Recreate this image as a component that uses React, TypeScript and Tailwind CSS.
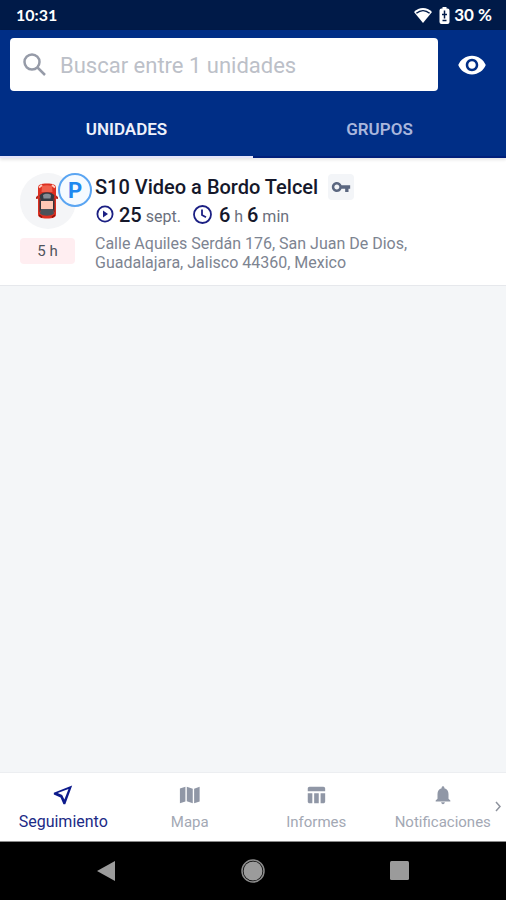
import { useState } from 'react';
import type { ReactNode } from 'react';

function StatusBar() {
  return (
    <div className="flex h-[30px] items-center justify-between bg-[#001a48] pr-[14px] pl-4 font-['Lato',sans-serif] text-[17px] font-bold text-white">
      <span className="text-[16px]">10:31</span>
      <div className="flex items-center">
        <svg width="20" height="16" viewBox="0 0 20 16" aria-hidden="true">
          <path d="M1 5C6-.2 14-.2 19 5l-9 11z" fill="#fff" />
          <path d="M3.400 6.200c4-3.400 9.200-3.400 13.200 0" fill="none" stroke="#001a48" strokeWidth="1.500" />
        </svg>
        <svg className="mr-1 ml-1.5" width="11" height="17" viewBox="0 0 11 17" aria-hidden="true">
          <path d="M3.500 0h4v1.600h1A2 2 0 0 1 10.500 3.600V15a2 2 0 0 1-2 2h-6a2 2 0 0 1-2-2V3.600a2 2 0 0 1 2-2h1z" fill="#fff" />
          <path d="M5.500 3.500v8M3 7.500h5M3.500 13.500h4" stroke="#001a48" strokeWidth="1.500" />
        </svg>
        <span>30 %</span>
      </div>
    </div>
  );
}

function Car() {
  return (
    <svg width="22" height="36" viewBox="0 0 22 36" aria-hidden="true">
      <path d="M0 14l3-2.500v4L0 16zM22 14l-3-2.500v4l3 .5z" fill="#b3261e" />
      <path d="M2 5C2 1.500 5 .5 11 .5s9 1 9 4.500v26c0 3.500-3 4.500-9 4.500S2 34.500 2 31z" fill="#dc2f20" />
      <path d="M6 3c3-1 7-1 10 0l.5 6h-11z" fill="#f0604c" />
      <path d="M3.500 12.500c3-4.500 12-4.500 15 0L17 19H5z" fill="#343a42" />
      <path d="M7 12c2-1.600 6-1.600 8 0l-.5 3.500h-7z" fill="#858c94" />
      <path d="M3.500 14.500l1.500 4v8l-1.500 3zM18.500 14.500l-1.500 4v8l1.500 3z" fill="#30343a" />
      <path d="M5 18h12v8H5z" fill="#ffc8b5" />
      <path d="M5 26h12l1 4.500c-3 3-11 3-14 0z" fill="#4b5259" />
      <path d="M3 4.500l3-2.500M19 4.500L16 2" stroke="#ffd0c4" strokeWidth="1.800" />
      <path d="M3 32l3 2.300M19 32l-3 2.300" stroke="#8c120c" strokeWidth="1.500" />
    </svg>
  );
}

function UnitRow() {
  return (
    <article className="flex border-b border-[#e6e8ec] bg-white pt-[15px] pr-5 pb-[13px] pl-5">
      <div className="w-[75px] shrink-0">
        <div className="relative flex size-[56px] items-center justify-center rounded-full bg-[#f4f5f7] pr-0.5">
          <Car />
          <span className="absolute top-0 left-[38px] flex size-[34px] items-center justify-center rounded-full border-2 border-[#5aa5f2] bg-[#f5faff] text-[22px] font-bold text-[#1e88f0]">
            P
          </span>
        </div>
        <div className="mt-[9px] flex h-[26px] w-[55px] items-center justify-center rounded-sm bg-[#ffeef1] text-[15px] text-[#50545c]">
          5 h
        </div>
      </div>
      <div className="min-w-0 flex-1">
        <div className="flex h-7 items-center gap-[10px]">
          <h2 className="text-[20px] font-medium whitespace-nowrap text-[#15182b]">S10 Video a Bordo Telcel</h2>
          <span className="flex size-[26px] items-center justify-center rounded-sm bg-[#f3f5f8]">
            <svg width="20" height="20" viewBox="0 0 24 24" fill="#5b6780" aria-hidden="true">
              <path d="M12.650 10C11.830 7.670 9.610 6 7 6c-3.310 0-6 2.690-6 6s2.690 6 6 6c2.610 0 4.830-1.670 5.650-4H17v4h4v-4h2v-4H12.650zM7 15c-1.650 0-3-1.350-3-3s1.350-3 3-3 3 1.350 3 3-1.350 3-3 3z" />
            </svg>
          </span>
        </div>
        <div className="flex h-7 items-center text-[16px] whitespace-nowrap text-[#6a6f7d]">
          <svg className="mr-1" width="20" height="20" viewBox="0 0 20 20" aria-hidden="true">
            <circle cx="10" cy="9" r="7.600" fill="none" stroke="#1b1f83" strokeWidth="1.800" />
            <path d="M8 5.500v7l5-3.500z" fill="#1b1f83" />
          </svg>
          <span>
            <b className="text-[20px] font-medium text-[#15182b]">25</b> sept.
          </span>
          <svg className="mr-1.5 ml-3" width="20" height="20" viewBox="0 0 20 20" fill="none" stroke="#1b1f83" strokeWidth="1.800" aria-hidden="true">
            <circle cx="9.500" cy="9.500" r="8.500" />
            <path d="M9 4.500V10l4 2.300" />
          </svg>
          <span>
            <b className="text-[20px] font-medium text-[#15182b]">6</b> h{' '}
            <b className="text-[20px] font-medium text-[#15182b]">6</b> min
          </span>
        </div>
        <p className="mt-[5px] max-w-[330px] text-[16px] leading-[19px] text-[#7d8491]">
          Calle Aquiles Serdán 176, San Juan De Dios, Guadalajara, Jalisco 44360, Mexico
        </p>
      </div>
    </article>
  );
}

const navItems: { label: string; icon: ReactNode }[] = [
  {
    label: 'Seguimiento',
    icon: <path d="M22 1.500L2 9.500v2l7.300 3.200L12.500 22h2zM18 5.500l-4.500 11.300-2.400-4.900-4.900-2.100z" fillRule="evenodd" />,
  },
  {
    label: 'Mapa',
    icon: <path d="M1 5l6-2v16l-6 2zM8.500 3l6.500 2.200V21l-6.500-2.200zM16.500 5.200l6-2.200v16l-6 2z" />,
  },
  {
    label: 'Informes',
    icon: <path d="M10 10.020h5V21h-5zM17 21h3c1.100 0 2-.9 2-2v-9h-5zM20 3H5c-1.100 0-2 .9-2 2v3h19V5c0-1.100-.9-2-2-2zM3 19c0 1.100.9 2 2 2h3V10H3z" />,
  },
  {
    label: 'Notificaciones',
    icon: <path d="M12 22c1.100 0 2-.9 2-2h-4c0 1.100.89 2 2 2zm6-6v-5c0-3.070-1.640-5.640-4.500-6.320V4c0-.83-.67-1.500-1.500-1.500s-1.500.67-1.500 1.500v.68C7.630 5.360 6 7.920 6 11v5l-2 2v1h16v-1z" />,
  },
];

export default function App() {
  const [tab, setTab] = useState('UNIDADES');
  const [active, setActive] = useState('Seguimiento');

  return (
    <div className="flex min-h-screen flex-col bg-[#f4f6f8] font-['Roboto',sans-serif]">
      <StatusBar />
      <header className="relative bg-[#002e86] pt-2 shadow-[0_2px_3px_rgba(0,0,0,0.1)]">
        <div className="flex items-center pl-[10px]">
          <label className="flex h-[53px] min-w-0 flex-1 items-center rounded-sm bg-white pl-3">
            <svg width="26" height="26" viewBox="0 0 26 26" fill="none" stroke="#969ba8" strokeWidth="2.500" aria-hidden="true">
              <circle cx="10" cy="10" r="7.500" />
              <path d="M15.500 15.500l7.500 7.500" />
            </svg>
            <input
              type="text"
              aria-label="Buscar"
              placeholder="Buscar entre 1 unidades"
              className="ml-3 min-w-0 flex-1 bg-transparent pt-0.5 text-[22px] outline-none placeholder:text-[#bcc0c8]"
            />
          </label>
          <button aria-label="Mostrar" className="flex h-[53px] w-[68px] items-center justify-center">
            <svg width="30" height="30" viewBox="0 0 24 24" fill="#fff" aria-hidden="true">
              <path d="M12 4.500C7 4.500 2.730 7.610 1 12c1.730 4.390 6 7.500 11 7.500s9.270-3.110 11-7.500c-1.730-4.390-6-7.500-11-7.500zM12 17c-2.760 0-5-2.240-5-5s2.240-5 5-5 5 2.240 5 5-2.240 5-5 5zm0-8c-1.660 0-3 1.340-3 3s1.340 3 3 3 3-1.340 3-3-1.340-3-3-3z" />
            </svg>
          </button>
        </div>
        <nav className="mt-[10px] flex">
          {['UNIDADES', 'GRUPOS'].map(name => (
            <button
              key={name}
              onClick={() => setTab(name)}
              className={`h-[57px] flex-1 border-b-2 pt-0.5 text-[17px] font-semibold ${
                tab === name ? 'border-[#e4e4fa] text-[#eef1fb]' : 'border-[#001f7a] text-[#a9b6dc]'
              }`}
            >
              {name}
            </button>
          ))}
        </nav>
      </header>

      <main className="flex-1">
        <UnitRow />
      </main>

      <nav className="relative flex h-[70px] border-t border-b border-t-[#eceef1] border-b-[#8a8a8a] bg-white">
        {navItems.map(item => (
          <button
            key={item.label}
            onClick={() => setActive(item.label)}
            className={`flex min-w-0 flex-1 flex-col items-center pt-[11px] ${
              active === item.label ? 'text-[16px] text-[#1c2a86]' : 'text-[15px] text-[#a3a8b4]'
            }`}
          >
            <svg
              width="22"
              height="22"
              viewBox="0 0 24 24"
              className={active === item.label ? 'fill-[#0d1b8c]' : 'fill-[#9097a6]'}
              aria-hidden="true"
            >
              {item.icon}
            </svg>
            <span className="mt-1 leading-6">{item.label}</span>
          </button>
        ))}
        <svg className="absolute top-[28px] right-[5px]" width="6" height="11" viewBox="0 0 6 11" fill="none" stroke="#8f949e" strokeWidth="1.500" aria-hidden="true">
          <path d="M1 1l4 4.500L1 10" />
        </svg>
      </nav>

      <div className="flex h-[58px] items-center justify-around bg-black px-[33px]">
        <button aria-label="Atrás">
          <svg width="22" height="22" viewBox="0 0 22 22">
            <path d="M20 1v20L2 11z" fill="#9b9b9b" />
          </svg>
        </button>
        <button aria-label="Inicio">
          <svg width="24" height="24" viewBox="0 0 24 24" fill="none" stroke="#8c8c8c">
            <circle cx="12" cy="12" r="11" strokeWidth="1.500" />
            <circle cx="12" cy="12" r="9.500" fill="#9b9b9b" stroke="none" />
          </svg>
        </button>
        <button aria-label="Recientes">
          <svg width="22" height="22" viewBox="0 0 22 22">
            <rect x="1" y="1" width="19" height="19" rx="1.500" fill="#9b9b9b" />
          </svg>
        </button>
      </div>
    </div>
  );
}
